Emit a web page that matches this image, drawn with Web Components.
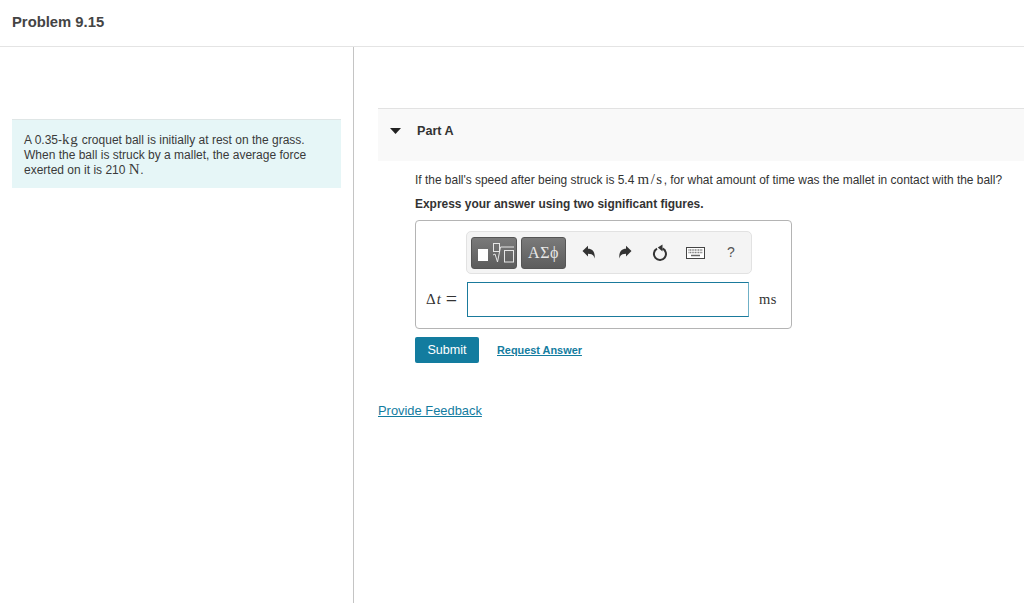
<!DOCTYPE html>
<html>
<head>
<meta charset="utf-8">
<style>
    html, body { margin: 0; height: 100%; background: #fff; }
    body { font-family: "Liberation Sans", Arial, sans-serif; color: #333; overflow: hidden; }
</style>
</head>
<body>
<problem-page></problem-page>

<template id="problem-page-tpl">
    <style>
        :host { display: flex; flex-direction: column; height: 603px; }
        header {
            height: 47px; box-sizing: border-box; border-bottom: 1px solid #e4e4e4;
            padding: 14px 0 0 12px; font-size: 14.8px; line-height: 16px; font-weight: bold; color: #444;
        }
        .cols { display: flex; flex: 1; min-height: 0; }
        .left { width: 354px; box-sizing: border-box; border-right: 1px solid #c4c4c4; padding: 72px 12px 0 12px; }
        .right { flex: 1; padding: 61px 0 0 24px; }
    </style>
    <header>Problem 9.15</header>
    <div class="cols">
        <div class="left">
            <intro-panel>A 0.35-<math-text>kg</math-text> croquet ball is initially at rest on the grass. When the ball is struck by a mallet, the average force exerted on it is 210 <math-text>N</math-text>.</intro-panel>
        </div>
        <div class="right">
            <part-section label="Part A">
                <answer-box></answer-box>
            </part-section>
            <feedback-link></feedback-link>
        </div>
    </div>
</template>

<template id="math-text-tpl"><style>:host { display: inline; font-family: "Liberation Serif", "Times New Roman", serif; font-size: 1.25em; line-height: 0; letter-spacing: .05em; }</style><slot></slot></template>

<template id="intro-panel-tpl">
    <style>
        :host {
            display: block; width: 329px; height: 69px; box-sizing: border-box;
            background: #e6f6f7; border-top: 1px solid #dfe6e6;
            padding: 13px 12px 0 12px; font-size: 12px; line-height: 15px; color: #3a3a3a;
        }
    </style>
    <slot></slot>
</template>

<template id="part-section-tpl">
    <style>
        :host { display: block; }
        .head {
            display: flex; height: 53px; box-sizing: border-box; background: #f9f9f9;
            border-top: 1px solid #e2e2e2; padding: 15px 0 0 12px;
        }
        svg { width: 11px; height: 6px; margin-top: 4px; }
        .title { margin-left: 16px; font-size: 12.6px; line-height: 14px; font-weight: bold; color: #333; }
        .body { padding: 12px 0 0 37px; font-size: 11.95px; line-height: 15px; color: #333; }
        p { margin: 0; white-space: nowrap; }
        .hint { margin-top: 9px; font-weight: bold; }
    </style>
    <div class="head">
        <svg viewBox="0 0 11 6"><path d="M0 0H11L5.500 6Z" fill="#222"/></svg>
        <div class="title" id="title"></div>
    </div>
    <div class="body">
        <p>If the ball's speed after being struck is 5.4 <math-text style="letter-spacing:.1em">m/s</math-text>, for what amount of time was the mallet in contact with the ball?</p>
        <p class="hint">Express your answer using two significant figures.</p>
        <slot></slot>
    </div>
</template>

<template id="answer-box-tpl">
    <style>
        :host { display: block; width: 377px; margin-top: 8px; }
        .box {
            height: 109px; box-sizing: border-box; border: 1px solid #b4b4b4; border-radius: 4px;
            padding: 10px 0 0 0;
        }
        .toolbar-row { display: flex; justify-content: flex-start; padding-left: 50px; }
        .entry { display: flex; align-items: center; margin-top: 8px; }
        .label { display: flex; align-items: center; width: 51px; box-sizing: border-box; padding-left: 10px; font-family: "Liberation Serif", serif; font-size: 15px; color: #333; white-space: nowrap; }
        .label i { font-style: italic; margin-left: 1px; }
        .label span { margin-left: 5px; font-size: 20px; line-height: 15px; }
        .field { width: 282px; height: 35px; box-sizing: border-box; border: 1px solid #1a7a9c; border-right-color: #6fb0c6; }
        .unit { margin-left: 10px; font-family: "Liberation Serif", serif; font-size: 14.5px; letter-spacing: .4px; color: #333; }
        .actions { display: flex; align-items: center; margin-top: 8px; }
        .submit {
            width: 64px; height: 26px; border-radius: 2px; background: #137c9f; color: #fff;
            display: flex; align-items: center; justify-content: center; font-size: 12.6px;
        }
        .request {
            margin-left: 18px; font-size: 10.9px; font-weight: bold; color: #137c9f;
            text-decoration: underline;
        }
    </style>
    <div class="box">
        <div class="toolbar-row"><math-toolbar></math-toolbar></div>
        <div class="entry">
            <div class="label">Δ<i>t</i><span>=</span></div>
            <div class="field"></div>
            <div class="unit">ms</div>
        </div>
    </div>
    <div class="actions">
        <div class="submit">Submit</div>
        <div class="request">Request Answer</div>
    </div>
</template>

<template id="math-toolbar-tpl">
    <style>
        :host {
            display: flex; align-items: center; width: 286px; height: 43px; box-sizing: border-box;
            background: #f4f4f4; border: 1px solid #e2e2e2; border-radius: 5px; padding-left: 4px;
        }
        .btn {
            height: 32px; box-sizing: border-box; border-radius: 3px; border: 1px solid #555;
            background: linear-gradient(#7a7a7a, #5c5c5c); display: flex; align-items: center; justify-content: center;
        }
        .b1 { width: 46px; }
        .b2 { width: 45px; margin-left: 4px; color: #e8e8e8; font-family: "Liberation Serif", serif; font-size: 16px; letter-spacing: .5px; }
        .icons { display: flex; align-items: center; margin-left: 13px; }
        .icons svg { display: block; }
        .q { font-size: 14px; color: #555; margin-left: 22px; }
    </style>
    <div class="btn b1">
        <svg width="44" height="30" viewBox="0 0 44 30" fill="none">
            <rect x="6" y="11" width="10" height="12" fill="#fff"/>
            <rect x="21.500" y="5.500" width="6" height="8" stroke="#e6e6e6"/>
            <path d="M21 17l2 -1 2.500 8 3 -15H42" stroke="#e6e6e6"/>
            <rect x="32.500" y="12.500" width="9" height="11.500" stroke="#e6e6e6"/>
        </svg>
    </div>
    <div class="btn b2">ΑΣϕ</div>
    <div class="icons">
        <svg width="14" height="15" viewBox="0 0 14 15" style="margin-left:3px"><path d="M0.500 6L6 0.800V3.800C10.500 3.800 13.200 6.800 12.700 13.500C11.700 10 10 8.700 6 8.700V11.500Z" fill="#333"/></svg>
        <svg width="14" height="15" viewBox="0 0 14 15" style="margin-left:22px"><path d="M13.500 6L8 0.800V3.800C3.500 3.800 0.800 6.800 1.300 13.500C2.300 10 4 8.700 8 8.700V11.500Z" fill="#333"/></svg>
        <svg width="16" height="18" viewBox="0 0 16 18" fill="none" style="margin-left:20px"><path d="M5 4.700A6 6 0 1 0 10.500 4.500" stroke="#333" stroke-width="2"/><path d="M10.500 0.500V7.500L5.800 3.500Z" fill="#333"/></svg>
        <svg width="19" height="12" viewBox="0 0 19 12" fill="none" style="margin-left:18px"><rect x=".5" y=".5" width="18" height="11" fill="#fff" stroke="#444"/><path d="M2.500 3H16.500M2.500 5.500H16.500" stroke="#777" stroke-width="1.500" stroke-dasharray="1 .6"/><path d="M5 8.500H14" stroke="#666" stroke-width="1.500"/></svg>
    </div>
    <div class="q">?</div>
</template>

<template id="feedback-link-tpl">
    <style>
        :host { display: block; margin-top: 40px; font-size: 12.9px; line-height: 15px; color: #137c9f; text-decoration: underline; }
    </style>
    Provide Feedback
</template>

<script>
    function simple(name, afterInit) {
        const $tpl = document.getElementById(name + '-tpl');
        customElements.define(name, class extends HTMLElement {
            constructor() {
                super();
                this.attachShadow({ mode: 'open' });
                this.shadowRoot.appendChild($tpl.content.cloneNode(true));
                if (afterInit) afterInit(this);
            }
        });
    }

    simple('math-text');
    simple('intro-panel');
    simple('math-toolbar');
    simple('answer-box');
    simple('feedback-link');
    simple('part-section', el => {
        el.shadowRoot.getElementById('title').textContent = el.getAttribute('label');
    });
    simple('problem-page');
</script>
</body>
</html>
